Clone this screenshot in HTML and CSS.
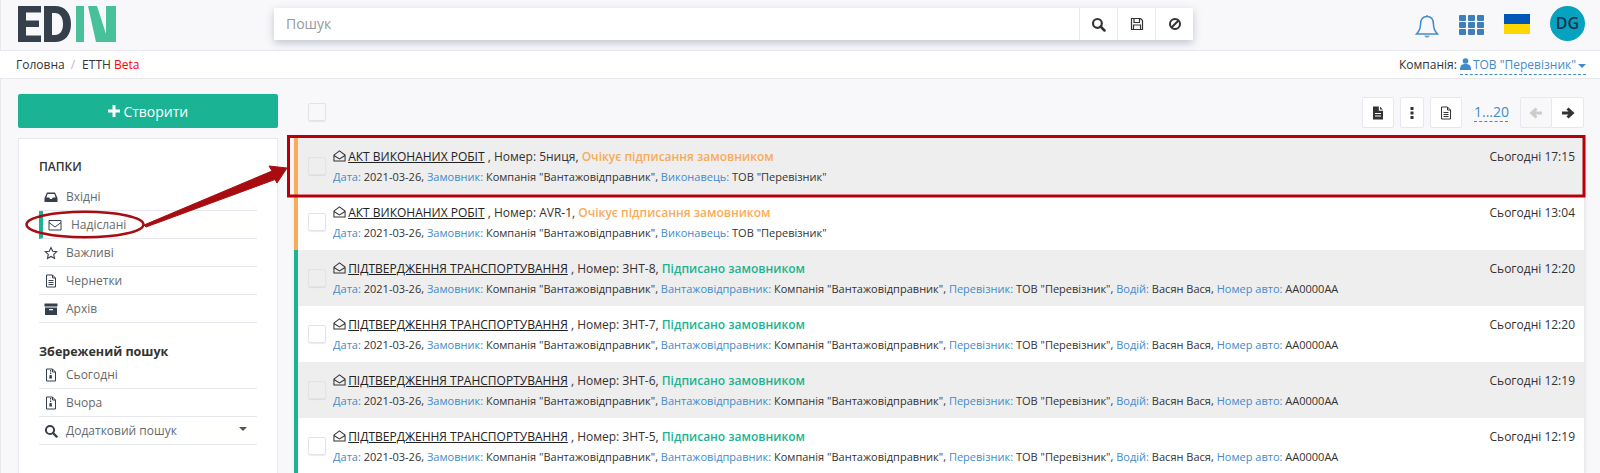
FILE: index.html
```html
<!DOCTYPE html>
<html lang="uk">
<head>
    <meta charset="UTF-8">
    <title>EDIN ЕТТН</title>
    <link rel="stylesheet" href="styles.css">
</head>
<body>
    <svg width="0" height="0" class="defs">
        <symbol id="i-open" viewBox="0 0 14 14"><path d="M1 6 7 1.5 13 6v6.5H1zM1 6.5l6 3.6 6-3.6" fill="none" stroke="currentColor" stroke-width="1.1"/></symbol>
        <symbol id="i-inbox" viewBox="0 0 14 14"><path d="M3 2.5h8l2.5 5.5v4H.5V8zM3.6 4 2.4 7.5h2.8l.9 1.6h1.8l.9-1.6h2.8L10.400 4z" fill="currentColor" fill-rule="evenodd"/></symbol>
        <symbol id="i-mail" viewBox="0 0 14 14"><path d="M1 2.500h12v9.500H1zM1 4.500l6 4.500 6-4.500" fill="none" stroke="currentColor" stroke-width="1"/></symbol>
        <symbol id="i-star" viewBox="0 0 14 14"><path d="M7 1.500 8.700 5.200l4 .5-3 2.700.8 4L7 10.400l-3.500 2 .8-4-3-2.700 4-.5z" fill="none" stroke="currentColor" stroke-width="1.100"/></symbol>
        <symbol id="i-doc" viewBox="0 0 14 14"><path d="M2.500 1h6l3 3v9h-9zM8.500 1v3h3M4.500 6.500h5M4.500 8.500h5M4.500 10.500h5" fill="none" stroke="currentColor" stroke-width="1"/></symbol>
        <symbol id="i-box" viewBox="0 0 14 14"><path d="M.5 1.500h13v3H.5zM1 5.500h12V13H1zM5 7v1.200h4V7z" fill="currentColor" fill-rule="evenodd"/></symbol>
        <symbol id="i-zip" viewBox="0 0 14 14"><path d="M2.500 1h6l3 3v9h-9zM8.500 1v3h3" fill="none" stroke="currentColor" stroke-width="1"/><path d="M6 2h1.200v1.500H6zM6 4.500h1.200V6H6zM5.600 7h2l.5 3.500H5.200z" fill="currentColor"/></symbol>
        <symbol id="i-search" viewBox="0 0 14 14"><circle cx="6" cy="6" r="4.100" fill="none" stroke="currentColor" stroke-width="2"/><path d="m9 9 3.600 3.600" stroke="currentColor" stroke-width="2.400" stroke-linecap="round"/></symbol>
        <symbol id="i-save" viewBox="0 0 14 14"><path d="M1.500 1.500h9l2 2v9h-11zM4 1.500v4h5.500v-4M3.500 12.500V8h7v4.500" fill="none" stroke="currentColor" stroke-width="1.200"/></symbol>
        <symbol id="i-ban" viewBox="0 0 14 14"><circle cx="7" cy="7" r="5" fill="none" stroke="currentColor" stroke-width="2"/><path d="m3.500 10.500 7-7" stroke="currentColor" stroke-width="2"/></symbol>
        <symbol id="i-filled" viewBox="0 0 14 14"><path d="M2 .500h5.800v4.200H12v8.800H2zM4 7v1h6V7zM4 9.500v1h6v-1zM9 .800 11.800 3.500H9z" fill="currentColor" fill-rule="evenodd"/></symbol>
        <symbol id="i-right" viewBox="0 0 14 14"><path d="M7.500 1.500 13.500 7l-6 5.500-2-2 2-2.100H1V5.600h6.500l-2-2.100z" fill="currentColor"/></symbol>
        <symbol id="i-left" viewBox="0 0 14 14"><path d="M6.500 1.500.5 7l6 5.500 2-2-2-2.100H13V5.600H6.500l2-2.100z" fill="currentColor"/></symbol>
    </svg>

    <header class="topbar">
        <svg class="logo" width="99" height="36" viewBox="0 0 99 36" role="img" aria-label="EDIN">
            <path d="M0 0h23v6.500H8v8h13v6.500H8v8.500h15V36H0zM26 0h11c10 0 16 7 16 18s-6 18-16 18H26zM34 7v22h3c5 0 8-4 8-11s-3-11-8-11z" fill="#36404d" fill-rule="evenodd"/>
            <path d="M58 0h8v36h-8zM70 0h9l9 28V0h10v36H78z" fill="#48c19b"/>
        </svg>
        <div class="search">
            <div class="search-input">Пошук</div>
            <button class="search-btn"><svg width="15" height="15"><use href="#i-search"/></svg></button>
            <button class="search-btn"><svg width="14" height="14"><use href="#i-save"/></svg></button>
            <button class="search-btn"><svg width="14" height="14"><use href="#i-ban"/></svg></button>
        </div>
        <div class="top-icons">
            <svg class="bell" width="24" height="26" viewBox="0 0 24 26"><path d="M12 2.500c-4.500 0-6.500 3.500-6.500 8 0 4.500-1.500 7-4 9.500h21c-2.500-2.500-4-5-4-9.500 0-4.500-2-8-6.500-8zM12 1v1.500" fill="none" stroke="#428bca" stroke-width="1.500"/><path d="M9.500 21.500h5c0 3-5 3-5 0z" fill="#7da7cc"/></svg>
            <div class="apps"><i></i><i></i><i></i><i></i><i></i><i></i><i></i><i></i><i></i></div>
            <div class="flag"></div>
            <div class="avatar">DG</div>
        </div>
    </header>

    <nav class="crumbs">
        <span class="crumb">Головна</span>
        <span class="crumb-sep">/</span>
        <span class="crumb">ЕТТН <b class="beta">Beta</b></span>
        <span class="company">Компанія:
            <span class="company-link"><svg class="user" width="11" height="12" viewBox="0 0 11 12"><circle cx="5.500" cy="3" r="2.800" fill="#428bca"/><path d="M0 12c0-4 1-6 5.500-6S11 8 11 12z" fill="#428bca"/></svg>ТОВ "Перевізник"<i class="caret"></i></span>
        </span>
    </nav>

    <main class="layout">
        <aside class="side">
            <button class="create"><svg width="12" height="12" viewBox="0 0 12 12"><path d="M4.500 0h3v4.500H12v3H7.500V12h-3V7.500H0v-3h4.500z" fill="#fff"/></svg> Створити</button>
            <div class="card">
                <h5 class="side-head">ПАПКИ</h5>
                <ul class="menu">
                    <li><svg width="14" height="14"><use href="#i-inbox"/></svg>Вхідні</li>
                    <li class="active"><svg width="14" height="14"><use href="#i-mail"/></svg>Надіслані</li>
                    <li><svg width="14" height="14"><use href="#i-star"/></svg>Важливі</li>
                    <li><svg width="14" height="14"><use href="#i-doc"/></svg>Чернетки</li>
                    <li><svg width="14" height="14"><use href="#i-box"/></svg>Архів</li>
                </ul>
                <h5 class="side-head saved">Збережений пошук</h5>
                <ul class="menu">
                    <li><svg width="14" height="14"><use href="#i-zip"/></svg>Сьогодні</li>
                    <li><svg width="14" height="14"><use href="#i-zip"/></svg>Вчора</li>
                    <li><svg width="14" height="14"><use href="#i-search"/></svg>Додатковий пошук<i class="caret dark"></i></li>
                </ul>
            </div>
        </aside>

        <section class="content">
            <div class="toolbar">
                <span class="check"></span>
                <div class="tools">
                    <button class="tool wide"><svg width="14" height="14"><use href="#i-filled"/></svg></button>
                    <button class="tool narrow"><svg width="4" height="12" viewBox="0 0 4 12"><path d="M.5 0h3v3h-3zM.5 4.500h3v3h-3zM.5 9h3v3h-3z" fill="#333"/></svg></button>
                    <button class="tool wide"><svg width="14" height="14"><use href="#i-doc"/></svg></button>
                    <span class="pages">1...20</span>
                    <div class="pager">
                        <button class="tool off"><svg width="14" height="14"><use href="#i-left"/></svg></button>
                        <button class="tool next"><svg width="14" height="14"><use href="#i-right"/></svg></button>
                    </div>
                </div>
            </div>

            <div class="rows">
                <div class="row grey wait">
                    <span class="check"></span>
                    <div class="row-body">
                        <div class="title"><svg width="13" height="14"><use href="#i-open"/></svg> <u>АКТ ВИКОНАНИХ РОБІТ</u> , Номер: 5ниця, <span class="orange">Очікує підписання замовником</span></div>
                        <div class="info"><em>Дата:</em> 2021-03-26, <em>Замовник:</em> Компанія "Вантажовідправник", <em>Виконавець:</em> ТОВ "Перевізник"</div>
                    </div>
                    <div class="time">Сьогодні 17:15</div>
                </div>
                <div class="row wait">
                    <span class="check"></span>
                    <div class="row-body">
                        <div class="title"><svg width="13" height="14"><use href="#i-open"/></svg> <u>АКТ ВИКОНАНИХ РОБІТ</u> , Номер: AVR-1, <span class="orange">Очікує підписання замовником</span></div>
                        <div class="info"><em>Дата:</em> 2021-03-26, <em>Замовник:</em> Компанія "Вантажовідправник", <em>Виконавець:</em> ТОВ "Перевізник"</div>
                    </div>
                    <div class="time">Сьогодні 13:04</div>
                </div>
                <div class="row grey signed">
                    <span class="check"></span>
                    <div class="row-body">
                        <div class="title"><svg width="13" height="14"><use href="#i-open"/></svg> <u>ПІДТВЕРДЖЕННЯ ТРАНСПОРТУВАННЯ</u> , Номер: ЗНТ-8, <span class="green">Підписано замовником</span></div>
                        <div class="info"><em>Дата:</em> 2021-03-26, <em>Замовник:</em> Компанія "Вантажовідправник", <em>Вантажовідправник:</em> Компанія "Вантажовідправник", <em>Перевізник:</em> ТОВ "Перевізник", <em>Водій:</em> Васян Вася, <em>Номер авто:</em> АА0000АА</div>
                    </div>
                    <div class="time">Сьогодні 12:20</div>
                </div>
                <div class="row signed">
                    <span class="check"></span>
                    <div class="row-body">
                        <div class="title"><svg width="13" height="14"><use href="#i-open"/></svg> <u>ПІДТВЕРДЖЕННЯ ТРАНСПОРТУВАННЯ</u> , Номер: ЗНТ-7, <span class="green">Підписано замовником</span></div>
                        <div class="info"><em>Дата:</em> 2021-03-26, <em>Замовник:</em> Компанія "Вантажовідправник", <em>Вантажовідправник:</em> Компанія "Вантажовідправник", <em>Перевізник:</em> ТОВ "Перевізник", <em>Водій:</em> Васян Вася, <em>Номер авто:</em> АА0000АА</div>
                    </div>
                    <div class="time">Сьогодні 12:20</div>
                </div>
                <div class="row grey signed">
                    <span class="check"></span>
                    <div class="row-body">
                        <div class="title"><svg width="13" height="14"><use href="#i-open"/></svg> <u>ПІДТВЕРДЖЕННЯ ТРАНСПОРТУВАННЯ</u> , Номер: ЗНТ-6, <span class="green">Підписано замовником</span></div>
                        <div class="info"><em>Дата:</em> 2021-03-26, <em>Замовник:</em> Компанія "Вантажовідправник", <em>Вантажовідправник:</em> Компанія "Вантажовідправник", <em>Перевізник:</em> ТОВ "Перевізник", <em>Водій:</em> Васян Вася, <em>Номер авто:</em> АА0000АА</div>
                    </div>
                    <div class="time">Сьогодні 12:19</div>
                </div>
                <div class="row signed">
                    <span class="check"></span>
                    <div class="row-body">
                        <div class="title"><svg width="13" height="14"><use href="#i-open"/></svg> <u>ПІДТВЕРДЖЕННЯ ТРАНСПОРТУВАННЯ</u> , Номер: ЗНТ-5, <span class="green">Підписано замовником</span></div>
                        <div class="info"><em>Дата:</em> 2021-03-26, <em>Замовник:</em> Компанія "Вантажовідправник", <em>Вантажовідправник:</em> Компанія "Вантажовідправник", <em>Перевізник:</em> ТОВ "Перевізник", <em>Водій:</em> Васян Вася, <em>Номер авто:</em> АА0000АА</div>
                    </div>
                    <div class="time">Сьогодні 12:19</div>
                </div>
            </div>
        </section>
    </main>

    <!-- червона рамка, овал і стрілка поверх сторінки -->
    <svg class="marks" width="1600" height="473" viewBox="0 0 1600 473">
        <rect x="288.500" y="136.500" width="1295.500" height="59.500" fill="none" stroke="#b5000b" stroke-width="3"/>
        <ellipse cx="85" cy="224.500" rx="58.500" ry="12.800" fill="none" stroke="#a80c10" stroke-width="2.500"/>
        <path d="M144 225 272 171 269 166 287 168 277 183 275 179.500 146 227z" fill="#a80c10" stroke="#a80c10" stroke-linejoin="round"/>
    </svg>
</body>
</html>
```

FILE: styles.css
```css
*{
    box-sizing: border-box;
}
html, body{
    height: 473px;
    overflow: hidden;
}
body{
    margin: 0;
    background-color: #f8f8fb;
    box-shadow: inset 1px 0 0 #e7e7ee;
    font-family: "Open Sans", "Noto Sans", sans-serif;
    font-size: 13px;
    color: #333;
    position: relative;
}
button{
    font-family: inherit;
    cursor: pointer;
}
.defs{
    position: absolute;
}

/* header */
.topbar{
    height: 51px;
    display: flex;
    align-items: flex-start;
    border-bottom: 1px solid #e7e7ee;
}
.logo{
    margin: 6px 0 0 18px;
    flex: none;
}
.search{
    margin: 8px 0 0 157px;
    width: 919px;
    height: 32px;
    display: flex;
    background-color: #fff;
    box-shadow: 0 3px 8px rgba(70, 80, 110, 0.3);
}
.search-input{
    flex: 1;
    padding: 6px 12px;
    font-size: 14px;
    color: #999;
}
.search-btn{
    width: 38px;
    border: none;
    border-left: 1px solid #e7e7ee;
    background-color: #fff;
    color: #333;
    padding: 0;
    display: flex;
    align-items: center;
    justify-content: center;
}
.top-icons{
    display: flex;
    align-items: flex-start;
    margin-left: 222px;
}
.bell{
    margin-top: 14px;
}
.apps{
    margin: 15px 0 0 20px;
    width: 25px;
    height: 20px;
    display: grid;
    grid-template-columns: repeat(3, 7px);
    grid-template-rows: repeat(3, 6px);
    gap: 1px 2px;
}
.apps i{
    background-color: #3d7ebb;
    border-radius: 1px;
}
.flag{
    margin: 14px 0 0 20px;
    width: 26px;
    height: 20px;
    background: linear-gradient(#0057b8 50%, #ffd700 50%);
}
.avatar{
    margin: 6px 0 0 20px;
    width: 35px;
    height: 35px;
    border-radius: 50%;
    background-color: #05a3bf;
    color: #14304f;
    font-size: 16px;
    font-weight: 600;
    line-height: 35px;
    text-align: center;
}

/* breadcrumb */
.crumbs{
    height: 28px;
    padding: 0 14px 0 16px;
    display: flex;
    align-items: center;
    background-color: #fff;
    border-bottom: 1px solid #e7e7ee;
    font-size: 12px;
}
.crumb-sep{
    margin: 0 7px 0 6px;
    color: #bbb;
}
.beta{
    color: #f00;
    font-weight: 400;
}
.company{
    margin-left: auto;
}
.company-link{
    color: #428bca;
    border-bottom: 1px dashed #428bca;
    padding-bottom: 1px;
}
.user{
    margin-right: 2px;
    vertical-align: -1px;
}
.caret{
    display: inline-block;
    vertical-align: middle;
    width: 0;
    height: 0;
    border-top: 4px solid #428bca;
    border-left: 4px solid transparent;
    border-right: 4px solid transparent;
    margin-left: 2px;
}
.caret.dark{
    border-top-color: #555;
    margin-left: auto;
    margin-right: 10px;
    margin-top: -4px;
}

/* main */
.layout{
    display: flex;
    padding: 15px 0 0 18px;
    align-items: flex-start;
}
.side{
    width: 260px;
    flex: none;
}
.create{
    display: block;
    width: 100%;
    height: 34px;
    border: none;
    border-radius: 2px;
    background-color: #1ab394;
    color: #fff;
    font-size: 14px;
}
.card{
    margin-top: 10px;
    height: 340px;
    padding: 20px 20px 0;
    background-color: #fff;
    border: 1px solid #e7e7ee;
}
.side-head{
    margin: 0 0 8px;
    font-size: 12px;
    line-height: 16px;
    font-weight: 600;
    color: #333;
}
.side-head.saved{
    margin: 21px 0 1px;
    font-size: 12.500px;
    font-weight: 700;
}
.menu{
    list-style: none;
    margin: 0;
    padding: 0;
}
.menu li{
    height: 28px;
    padding-left: 5px;
    display: flex;
    align-items: center;
    border-bottom: 1px solid #e7e7ee;
    color: #676a6c;
    font-size: 12px;
}
.menu svg{
    color: #36404d;
    margin-right: 8px;
    flex: none;
}
.menu li.active{
    padding-left: 5px;
    border-left: 4px solid #1ab394;
}
.menu li.active svg{
    margin-right: 9px;
}

/* list */
.content{
    margin-left: 16px;
    width: 1290px;
}
.toolbar{
    height: 44px;
    display: flex;
    align-items: flex-start;
    padding-left: 14px;
}
.check{
    display: block;
    flex: none;
    width: 18px;
    height: 18px;
    background-color: transparent;
    border: 1px solid #e3e3e3;
    border-radius: 2px;
    box-shadow: 0 1px 1px rgba(0, 0, 0, 0.08);
}
.toolbar .check{
    margin-top: 9px;
}
.tools{
    margin-left: auto;
    display: flex;
    align-items: center;
    height: 31px;
    margin-top: 3px;
    margin-right: 1px;
}
.tool{
    height: 31px;
    padding: 0;
    background-color: #fff;
    border: 1px solid #e7e7ee;
    border-radius: 2px;
    color: #333;
    display: flex;
    align-items: center;
    justify-content: center;
    width: 32px;
}
.tool.narrow{
    width: 24px;
    margin: 0 6px;
}
.tool.off{
    color: #ccc;
    background-color: #f8f8fb;
}
.tool.next{
    width: 33px;
}
.pages{
    margin: 0 12px;
    color: #428bca;
    font-size: 14px;
    line-height: 18px;
    border-bottom: 1px dashed #428bca;
    width: 34px;
    white-space: nowrap;
}
.pager{
    display: flex;
}
.pager .tool{
    margin-right: -1px;
}
.rows{
    width: 1290px;
    box-shadow: 1px 0 4px rgba(0, 0, 0, 0.1);
}
.row{
    height: 56px;
    padding: 10px 9px 0 10px;
    display: flex;
    background-color: #fff;
    border-left: 4px solid;
}
.row.grey{
    background-color: #eee;
}
.row.wait{
    border-left-color: #f8ac59;
}
.row.signed{
    border-left-color: #1ab394;
}
.row .check{
    margin-top: 9px;
}
.row-body{
    margin-left: 7px;
    flex: 1;
}
.title{
    font-size: 12px;
    line-height: 18px;
    white-space: nowrap;
}
.title svg{
    vertical-align: -2px;
    margin-right: -1px;
}
.title u{
    color: #222;
}
.orange{
    color: #f8ac59;
    font-weight: 600;
}
.green{
    color: #1ab394;
    font-weight: 600;
}
.info{
    margin-top: 3px;
    font-size: 11.020px;
    line-height: 16px;
    white-space: nowrap;
}
.info em{
    font-style: normal;
    color: #428bca;
}
.time{
    font-size: 12px;
    line-height: 18px;
}

/* overlay */
.marks{
    position: absolute;
    left: 0;
    top: 0;
    pointer-events: none;
}
```
